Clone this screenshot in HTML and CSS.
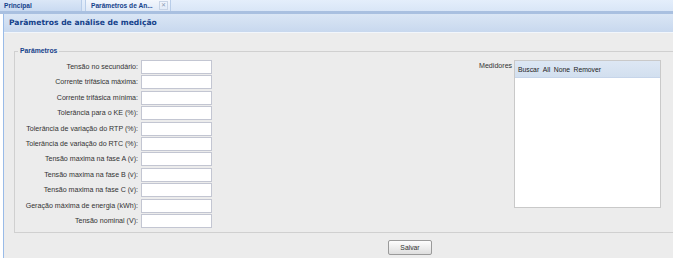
FILE: index.html
```html
<!DOCTYPE html>
<html lang="pt">
<head>
    <meta charset="UTF-8">
    <title>Parâmetros de análise de medição</title>
    <link rel="stylesheet" href="styles.css">
</head>
<body>
    <div class="tabbar">
        <div class="tab">Principal</div>
        <div class="tab active">Parâmetros de An... <span class="close">&#x2715;</span></div>
    </div>

    <div class="panel">
        <div class="panel-header">Parâmetros de análise de medição</div>
        <div class="panel-body">
            <fieldset class="params">
                <legend>Parâmetros</legend>
                <div class="cols">
                    <div class="form">
                        <label>Tensão no secundário:</label><input type="text">
                        <label>Corrente trifásica máxima:</label><input type="text">
                        <label>Corrente trifásica mínima:</label><input type="text">
                        <label>Tolerância para o KE (%):</label><input type="text">
                        <label>Tolerância de variação do RTP (%):</label><input type="text">
                        <label>Tolerância de variação do RTC (%):</label><input type="text">
                        <label>Tensão maxima na fase A (v):</label><input type="text">
                        <label>Tensão maxima na fase B (v):</label><input type="text">
                        <label>Tensão maxima na fase C (v):</label><input type="text">
                        <label>Geração máxima de energia (kWh):</label><input type="text">
                        <label>Tensão nominal (V):</label><input type="text">
                    </div>
                    <div class="medidores">
                        <label>Medidores</label>
                        <div class="list">
                            <div class="list-toolbar">
                                <span>Buscar</span><span>All</span><span>None</span><span>Remover</span>
                            </div>
                        </div>
                    </div>
                </div>
            </fieldset>
            <div class="actions">
                <button>Salvar</button>
            </div>
        </div>
    </div>
</body>
</html>
```

FILE: styles.css
```css
body {
    margin: 0;
    width: 673px;
    height: 258px;
    overflow: hidden;
    background: #fff;
    font-family: 'Liberation Sans', Arial, sans-serif;
    color: #333;
}

.tabbar {
    display: flex;
    height: 11px;
    background: linear-gradient(#e4eefb, #d9e6f7);
    border-bottom: 3px solid #a9c0e0;
}
.tab {
    width: 82px;
    height: 11px;
    padding-left: 4px;
    box-sizing: border-box;
    font-size: 6.6px;
    font-weight: bold;
    line-height: 11px;
    color: #15428b;
    background: linear-gradient(#dbe7f7, #c9daf1);
    border-right: 1px solid #b8cde9;
}
.tab.active {
    width: 86px;
    margin-left: 3px;
    padding-left: 5px;
    background: linear-gradient(#f3f7fd, #dfe9f7);
    border-left: 1px solid #b8cde9;
}
.close {
    display: inline-block;
    margin-left: 4px;
    width: 7px;
    height: 7px;
    line-height: 7px;
    text-align: center;
    font-weight: normal;
    color: #8d9bb5;
    font-size: 6px;
    border: 1px solid #c8d4e6;
    vertical-align: 1px;
}

.panel {
    margin-left: 3px;
    border-left: 1px solid #99bbe8;
    width: 680px;
}
.panel-header {
    height: 18px;
    padding-left: 5px;
    font-family: 'DejaVu Sans', Verdana, sans-serif;
    font-size: 7.6px;
    font-weight: bold;
    line-height: 18px;
    color: #15428b;
    background: linear-gradient(#dae6f5, #c8d8ee);
    border-bottom: 1px solid #f2f6fb;
}
.panel-body {
    background: #ececec;
    padding: 13px 0 0 10px;
    height: 226px;
    box-sizing: border-box;
}

.params {
    margin: 0;
    padding: 4px 0 4px 0;
    border: 1px solid #d0d0d0;
    border-right: none;
}
.params legend {
    margin-left: 3px;
    padding: 0 2px;
    font-size: 6.8px;
    font-weight: bold;
    line-height: 10px;
    color: #15428b;
}
.cols {
    display: flex;
}
.form {
    display: grid;
    grid-template-columns: 123px 71px;
    column-gap: 3px;
    row-gap: 1.4px;
    align-items: center;
}
.form label {
    text-align: right;
    font-size: 7.1px;
    color: #333;
}
.form input {
    width: 71px;
    height: 14px;
    margin: 0;
    padding: 0;
    box-sizing: border-box;
    border: 1px solid #c3c6d2;
    background: #fff;
}

.medidores {
    display: flex;
    align-items: flex-start;
    margin-left: 267px;
    gap: 2px;
}
.medidores label {
    width: 33px;
    text-align: right;
    font-size: 7.1px;
    line-height: 12px;
    color: #333;
}
.list {
    width: 147px;
    height: 148px;
    box-sizing: border-box;
    background: #fff;
    border: 1px solid #c9c9c9;
}
.list-toolbar {
    height: 16px;
    display: flex;
    align-items: center;
    gap: 3.5px;
    padding-left: 3px;
    font-size: 6.8px;
    color: #222;
    background: linear-gradient(#dde7f4, #d2dfef);
    border-bottom: 1px solid #c6d5ea;
}

.actions {
    display: flex;
    justify-content: center;
    padding-top: 7px;
    padding-left: 122px;
}
button {
    width: 44px;
    height: 15px;
    padding: 0;
    font-family: 'Liberation Sans', Arial, sans-serif;
    font-size: 6.8px;
    color: #333;
    border: 1px solid #9a9a9a;
    border-radius: 2px;
    background: linear-gradient(#fdfdfd, #dedede);
}
```
